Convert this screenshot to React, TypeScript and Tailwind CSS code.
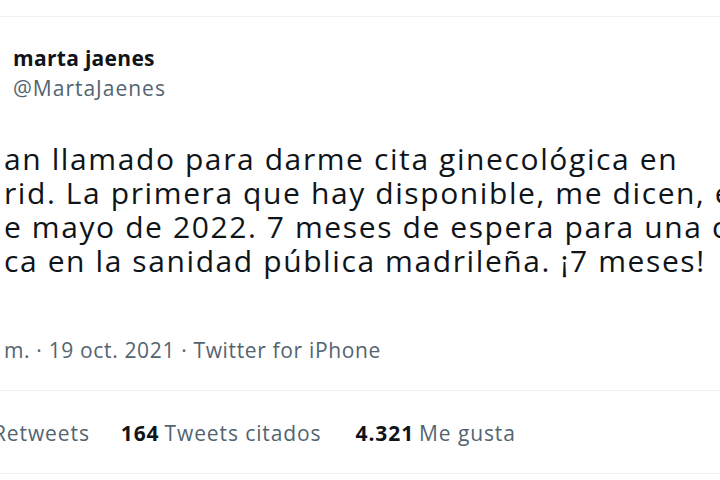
import React from "react";

const lines: string[] = [
  "an llamado para darme cita ginecológica en",
  "rid. La primera que hay disponible, me dicen, es el",
  "e mayo de 2022. 7 meses de espera para una cita",
  "ca en la sanidad pública madrileña. ¡7 meses!",
];

export default function App() {
  return (
    <div
      className="w-[720px] h-[480px] overflow-hidden bg-white text-[#0f1419]"
      style={{ fontFamily: '"Open Sans", "Noto Sans", Arial, sans-serif' }}
    >
      <div className="h-[16px]" />
      <div className="border-t border-[#eff3f4]" />
      <div className="pl-[13px] pt-[28px]">
        <div className="text-[21px] leading-[26px] font-bold tracking-[0.3px] text-[#0f1419]">marta jaenes</div>
        <div className="text-[21px] leading-[26px] mt-[4px] tracking-[1px] text-[#536471]">@MartaJaenes</div>
      </div>
      <div className="mt-[41px] pl-[4px] text-[30px] leading-[34px] tracking-[1.6px]">
        {lines.map((l, i) => (
          <div key={i} className="whitespace-nowrap">
            {l}
          </div>
        ))}
      </div>
      <div className="mt-[59px] pl-[4px] whitespace-nowrap text-[21px] leading-[26px] tracking-[0.65px] text-[#536471]">
        m. · 19 oct. 2021 · Twitter for iPhone
      </div>
      <div className="mt-[27px] border-t border-[#eff3f4]" />
      <div className="flex items-center h-[82px] pt-[4px] whitespace-nowrap text-[21px] tracking-[0.9px] text-[#536471]">
        <span className="ml-[-7px]">Retweets</span>
        <span className="ml-[31px] font-bold text-[#0f1419]">164</span>
        <span className="ml-[5px]">Tweets citados</span>
        <span className="ml-[34px] font-bold text-[#0f1419]">4.321</span>
        <span className="ml-[5px]">Me gusta</span>
      </div>
      <div className="border-t border-[#eff3f4]" />
    </div>
  );
}
